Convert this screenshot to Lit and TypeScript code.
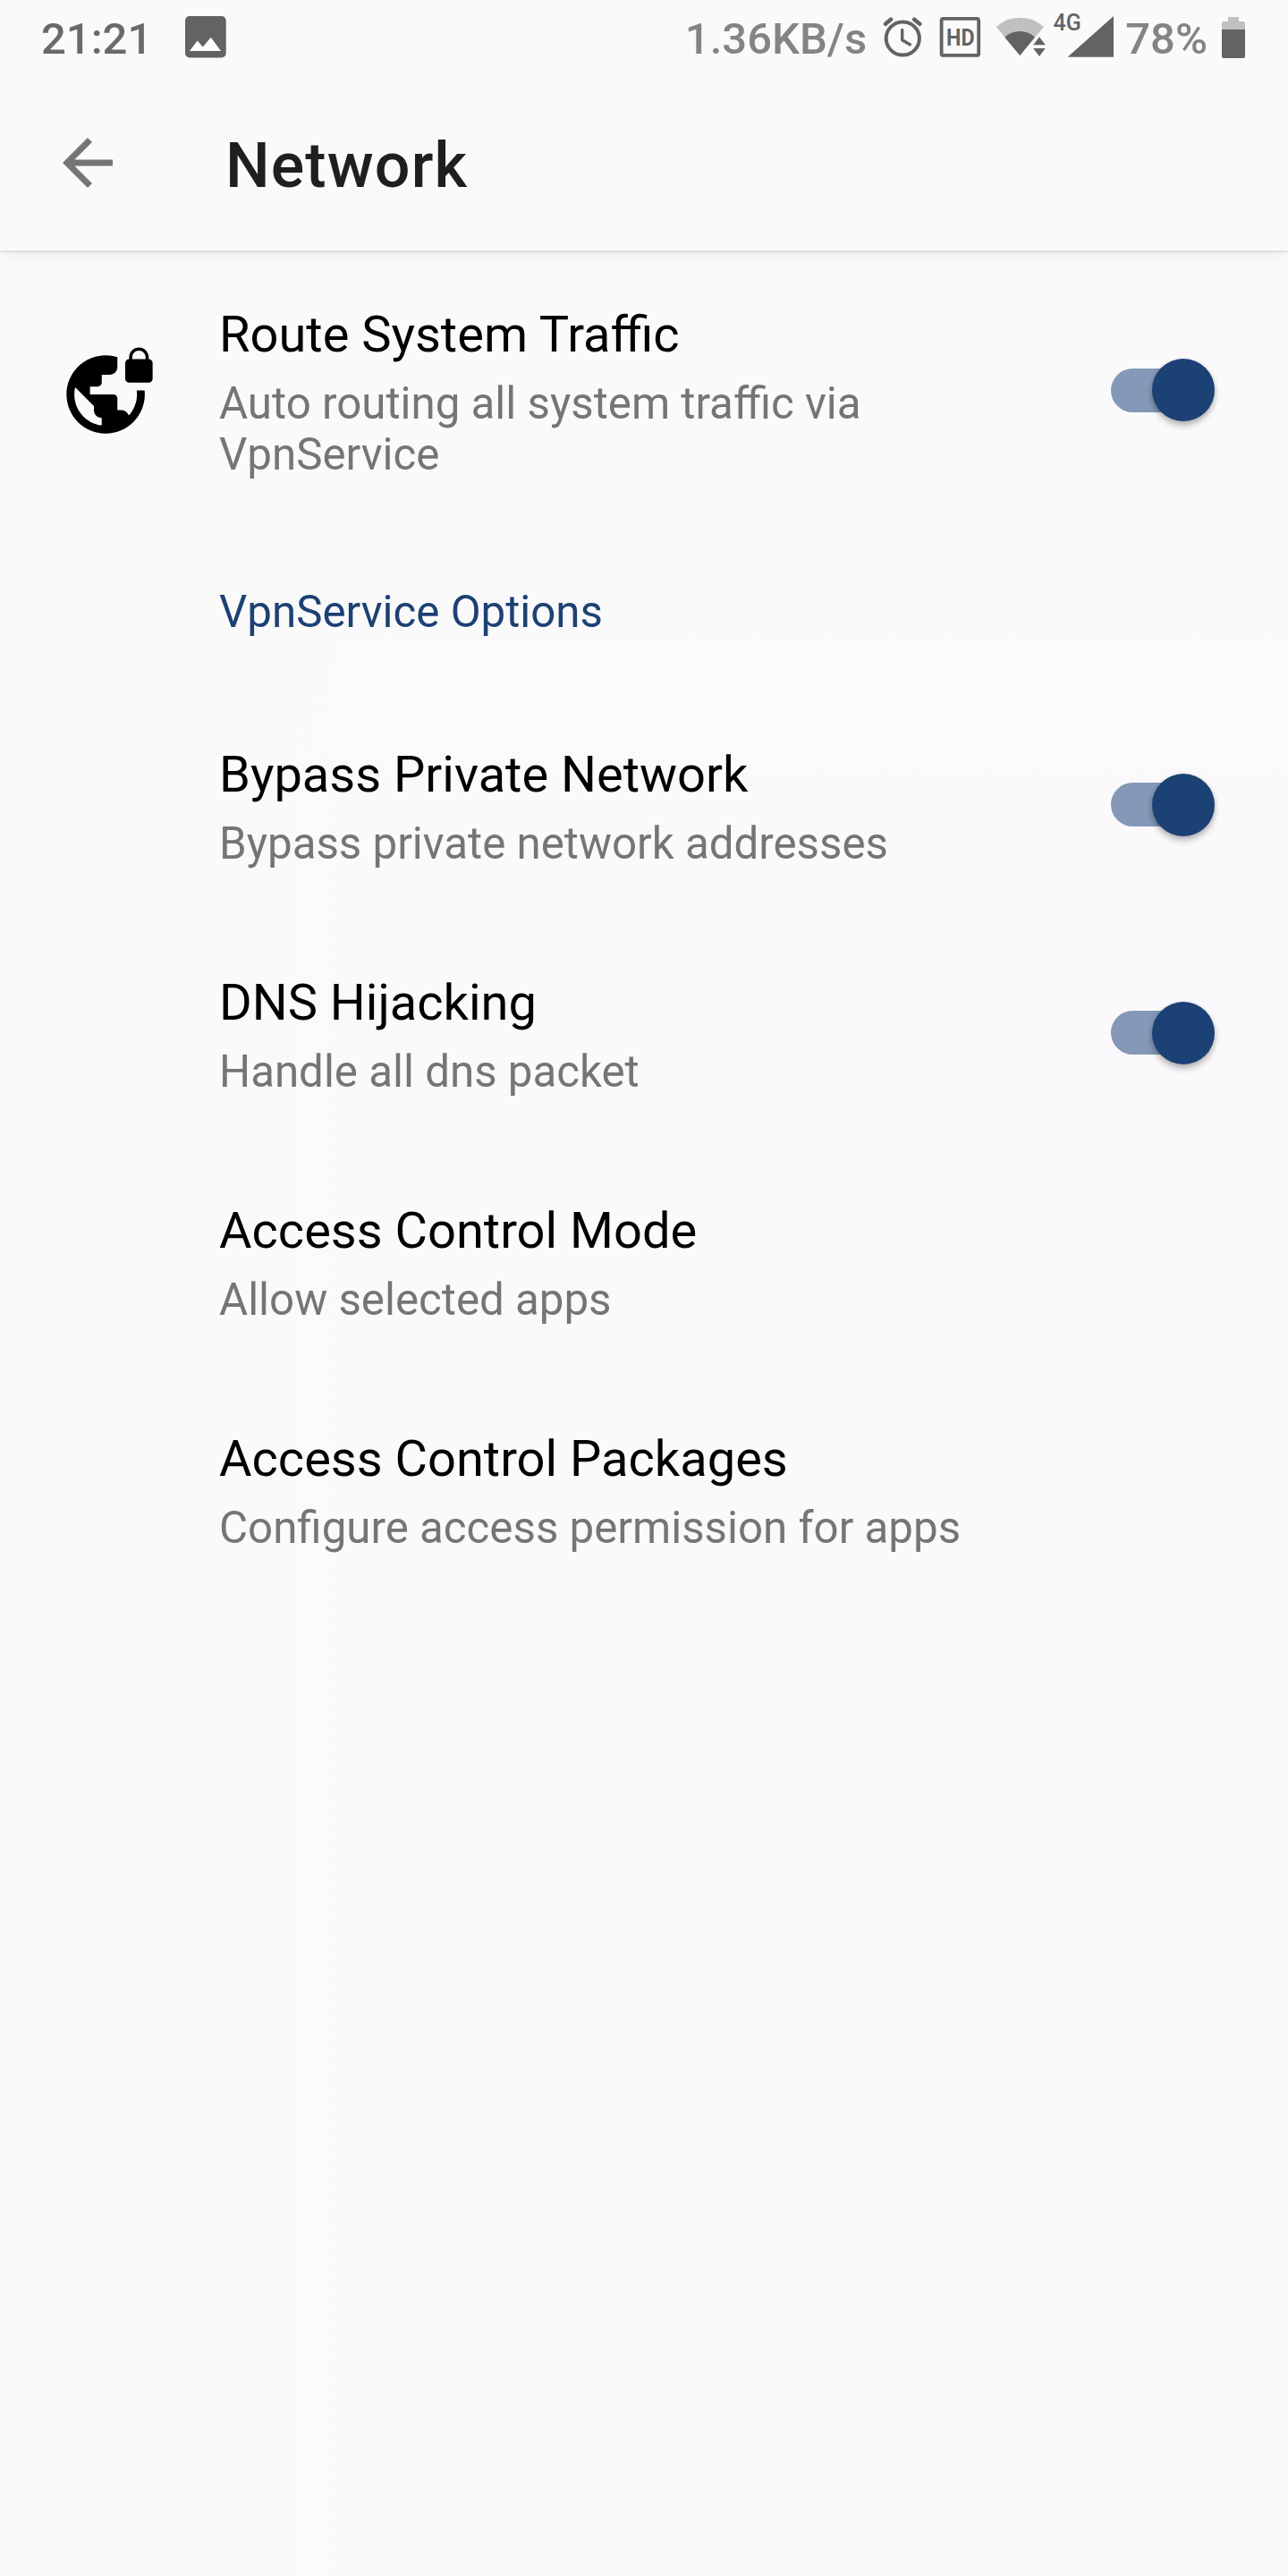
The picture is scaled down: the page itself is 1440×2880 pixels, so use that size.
import { LitElement, html, css, svg, nothing } from "lit";
import { customElement, property } from "lit/decorators.js";

@customElement("status-bar")
export class StatusBar extends LitElement {
  static styles = css`
    :host {
      display: flex;
      align-items: flex-start;
      height: 84px;
      box-sizing: border-box;
      padding: 0 48px 0 46px;
      font: 500 49px/58px Roboto, sans-serif;
      color: #6a6a6a;
    }
    svg { display: block; flex: none; height: 84px; }
    .label { padding-top: 15px; white-space: pre; }
    .muted { color: #848484; }
    .picture { width: 46px; margin-left: 37px; }
    .right { display: flex; margin-left: auto; }
    .alarm { width: 44px; margin-left: 18px; }
    .hd { width: 47px; margin-left: 19px; }
    .signal { width: 133px; margin: 0 12px 0 16px; }
    .battery { width: 26px; margin-left: 16px; }
    .tag { font: 500 25px Roboto, sans-serif; }
    .hd-tag { font: 700 25px Roboto, sans-serif; }
  `;
  render() {
    return html`
      <span class="label">21:21</span>
      <svg class="picture" viewBox="207 0 46 84">
        <rect x="207" y="18" width="45.7" height="46.4" rx="5" fill="#636363" />
        <path fill="#fff" d="M212 57l8.7-11.5 6.1 7 8.9-10.8L247 57z" />
      </svg>
      <div class="right">
        <span class="label muted">1.36KB/s</span>
        <svg class="alarm" viewBox="987 0 44 84" fill="none" stroke="#636363" stroke-width="4">
          <circle cx="1009.3" cy="43" r="18.6" />
          <path d="M1008.7 33.5v11.3l8.6 5" stroke-width="3.4" stroke-linecap="round" stroke-linejoin="round" />
          <path d="M990 26.8l6-5M1028.2 26.8l-6-5" stroke-width="4.6" stroke-linecap="round" />
        </svg>
        <svg class="hd" viewBox="1050 0 47 84">
          <rect x="1052.6" y="20.9" width="41.6" height="41" rx="2" fill="none" stroke="#636363" stroke-width="3.8" />
          <text class="hd-tag" x="1058" y="51" textLength="31.5" lengthAdjust="spacingAndGlyphs" fill="#636363">HD</text>
        </svg>
        <svg class="signal" viewBox="1113 0 133 84" fill="#636363">
          <path fill="#c0c0c0" d="M1140.3 62L1113.8 30Q1125 19.8 1140.3 19.8T1167 30z" />
          <path d="M1140.3 62L1123.3 41.7Q1130 35 1140.3 35T1156.9 41.7z" />
          <path fill="#fafafa" d="M1162 36.5L1150.5 51.5V66H1172V49z" />
          <path d="M1162 41.3l6.8 9h-13.6zM1162 63l6.8-9h-13.6z" />
          <text class="tag" x="1177.5" y="34">4G</text>
          <path d="M1193.7 63.7H1245V18z" />
        </svg>
        <span class="label muted">78%</span>
        <svg class="battery" viewBox="1366 0 26 84">
          <path fill="#c0c0c0" d="M1373 24v-5h12v5h5a2 2 0 0 1 2 2v8h-26v-8a2 2 0 0 1 2-2z" />
          <path fill="#636363" d="M1366 33h26v30a2 2 0 0 1-2 2h-22a2 2 0 0 1-2-2z" />
        </svg>
      </div>
    `;
  }
}

@customElement("app-bar")
export class AppBar extends LitElement {
  @property() heading = "";
  static styles = css`
    :host {
      display: flex;
      align-items: center;
      height: 196px;
      padding-left: 56px;
    }
    svg { width: 84px; height: 84px; fill: #757575; }
    .title {
      margin: 6px 0 0 112px;
      font: 500 70px/82px Roboto, sans-serif;
      letter-spacing: 1.1px;
      color: #1f1f1f;
    }
  `;
  render() {
    return html`
      <svg viewBox="0 0 24 24"><path d="M20 11H7.83l5.59-5.59L12 4l-8 8 8 8 1.41-1.41L7.83 13H20z" /></svg>
      <div class="title">${this.heading}</div>
    `;
  }
}

@customElement("toggle-switch")
export class ToggleSwitch extends LitElement {
  static styles = css`
    :host {
      display: flex;
      align-items: center;
      justify-content: flex-end;
      width: 100px;
      height: 49px;
      margin-right: 16px;
      border-radius: 25px;
      background: #8499b7;
    }
    .thumb {
      flex: none;
      width: 70px;
      height: 70px;
      margin-right: -16px;
      border-radius: 50%;
      background: #1c4174;
      box-shadow: 0 5px 7px rgba(0, 0, 0, 0.24), 0 1px 5px rgba(0, 0, 0, 0.12);
    }
  `;
  render() {
    return html`<div class="thumb"></div>`;
  }
}

@customElement("preference-row")
export class PreferenceRow extends LitElement {
  @property() heading = "";
  @property() summary = "";
  @property({ type: Boolean }) toggle = false;
  @property({ type: Boolean }) vpn = false;
  static styles = css`
    :host {
      display: grid;
      grid-template-columns: 175px 941px auto;
      align-items: center;
      padding: 0 82px 0 70px;
    }
    .icon { width: 105px; height: 105px; display: block; }
    .text { padding: 61px 0 55px; grid-column: 2; }
    .title { font: 400 56px/66px Roboto, sans-serif; color: #000; }
    .summary {
      margin-top: 16px;
      font: 400 49.25px/57px Roboto, sans-serif;
      color: #757575;
    }
    .switch { justify-self: end; }
  `;
  render() {
    return html`
      ${this.vpn
        ? html`<svg class="icon" viewBox="0 0 24 24">${svg`<path d="M22 4v-.5C22 2.12 20.88 1 19.5 1S17 2.12 17 3.5V4c-.55 0-1 .45-1 1v4c0 .55.45 1 1 1h5c.55 0 1-.45 1-1V5c0-.55-.45-1-1-1zm-.8 0h-3.4v-.5c0-.94.76-1.7 1.7-1.7s1.7.76 1.7 1.7V4zm-2.28 8c.04.33.08.66.08 1 0 2.08-.8 3.97-2.1 5.39-.26-.81-1-1.39-1.9-1.39h-1v-3c0-.55-.45-1-1-1H7v-2h2c.55 0 1-.45 1-1V8h2c1.1 0 2-.9 2-2V3.46c-.95-.3-1.95-.46-3-.46C5.48 3 1 7.48 1 13s4.48 10 10 10 10-4.48 10-10c0-.34-.02-.67-.05-1h-2.03zM10 20.93c-3.95-.49-7-3.85-7-7.93 0-.62.08-1.21.21-1.79L8 16v1c0 1.1.9 2 2 2v1.93z"/>`}</svg>`
        : nothing}
      <div class="text">
        <div class="title">${this.heading}</div>
        <div class="summary">${this.summary}</div>
      </div>
      ${this.toggle ? html`<toggle-switch class="switch"></toggle-switch>` : nothing}
    `;
  }
}

interface Preference {
  heading: string;
  summary: string;
  toggle: boolean;
}

const vpnOptions: Preference[] = [
  { heading: "Bypass Private Network", summary: "Bypass private network addresses", toggle: true },
  { heading: "DNS Hijacking", summary: "Handle all dns packet", toggle: true },
  { heading: "Access Control Mode", summary: "Allow selected apps", toggle: false },
  { heading: "Access Control Packages", summary: "Configure access permission for apps", toggle: false },
];

@customElement("app-root")
export class AppRoot extends LitElement {
  static styles = css`
    :host {
      display: block;
      width: 1440px;
      height: 2880px;
      overflow: hidden;
      background:
        linear-gradient(180deg, #fafafa 500px, rgba(250, 250, 250, 0) 900px),
        linear-gradient(90deg, #fafafa 270px, #fbf9fc 380px);
    }
    .top {
      height: 280px;
      background: #fafafa;
      box-shadow: 0 2px 3px rgba(0, 0, 0, 0.1), 0 6px 16px rgba(0, 0, 0, 0.04);
    }
    .category {
      height: 180px;
      box-sizing: border-box;
      padding: 64px 0 0 245px;
      font: 400 49.25px/57px Roboto, sans-serif;
      color: #1c4174;
    }
  `;
  render() {
    return html`
      <header class="top">
        <status-bar></status-bar>
        <app-bar heading="Network"></app-bar>
      </header>
      <main>
        <preference-row
          heading="Route System Traffic"
          summary="Auto routing all system traffic via VpnService"
          toggle
          vpn
        ></preference-row>
        <div class="category">VpnService Options</div>
        ${vpnOptions.map(
          (p) => html`<preference-row .heading=${p.heading} .summary=${p.summary} .toggle=${p.toggle}></preference-row>`,
        )}
      </main>
    `;
  }
}
